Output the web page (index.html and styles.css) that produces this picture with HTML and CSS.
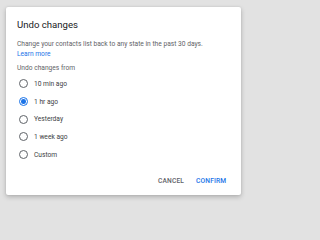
FILE: index.html
```html
<!DOCTYPE html>
<html>
<head>
<meta charset="utf-8">
<link rel="stylesheet" href="styles.css">
</head>
<body>
<div class="dialog">
  <div class="title">Undo changes</div>
  <p class="desc">Change your contacts list back to any state in the past 30 days.<br><a class="link">Learn more</a></p>
  <div class="label">Undo changes from</div>
  <div class="options">
    <div class="opt"><span class="radio"></span><span class="opt-text">10 min ago</span></div>
    <div class="opt"><span class="radio checked"></span><span class="opt-text">1 hr ago</span></div>
    <div class="opt"><span class="radio"></span><span class="opt-text">Yesterday</span></div>
    <div class="opt"><span class="radio"></span><span class="opt-text">1 week ago</span></div>
    <div class="opt"><span class="radio"></span><span class="opt-text">Custom</span></div>
  </div>
  <div class="actions">
    <span class="btn cancel">CANCEL</span>
    <span class="btn confirm">CONFIRM</span>
  </div>
</div>
</body>
</html>
```
FILE: styles.css
```css
html, body {
  margin: 0;
  padding: 0;
  background: #e2e2e2;
  width: 248px;
  height: 203px;
  overflow: hidden;
}
body {
  font-family: Roboto, "Liberation Sans", sans-serif;
}
.dialog {
  margin: 7px 0 0 6px;
  width: 235px;
  height: 188px;
  box-sizing: border-box;
  background: #fff;
  border-radius: 2px;
  box-shadow: 0 2px 5px rgba(0,0,0,0.22), 0 0 2px rgba(0,0,0,0.1);
  padding: 11px 11px 0 11px;
}
.title {
  font-size: 9.6px;
  line-height: 14px;
  color: #202124;
}
.desc {
  margin: 7.3px 0 0 0;
  font-size: 6.65px;
  line-height: 10px;
  color: #5f6368;
  white-space: nowrap;
}
.link {
  color: #1a73e8;
}
.label {
  margin-top: 3.6px;
  font-size: 6.65px;
  line-height: 10px;
  color: #5f6368;
}
.options {
  margin-top: 2.2px;
  display: flex;
  flex-direction: column;
}
.opt {
  height: 17.7px;
  display: flex;
  align-items: center;
}
.radio {
  width: 9px;
  height: 9px;
  box-sizing: border-box;
  border: 1px solid #5f6368;
  border-radius: 50%;
  margin-left: 2px;
  display: flex;
  align-items: center;
  justify-content: center;
}
.radio.checked {
  border-color: #1a73e8;
}
.radio.checked::after {
  content: "";
  width: 4.6px;
  height: 4.6px;
  border-radius: 50%;
  background: #1a73e8;
}
.opt-text {
  margin-left: 6px;
  font-size: 6.65px;
  color: #3c4043;
}
.actions {
  margin-top: 9px;
  height: 17px;
  display: flex;
  align-items: center;
  justify-content: flex-end;
  padding-right: 3.7px;
  gap: 12px;
}
.btn {
  font-size: 6.65px;
  font-weight: 500;
  letter-spacing: 0.15px;
}
.cancel {
  color: #5f6368;
}
.confirm {
  color: #1a73e8;
}
```
